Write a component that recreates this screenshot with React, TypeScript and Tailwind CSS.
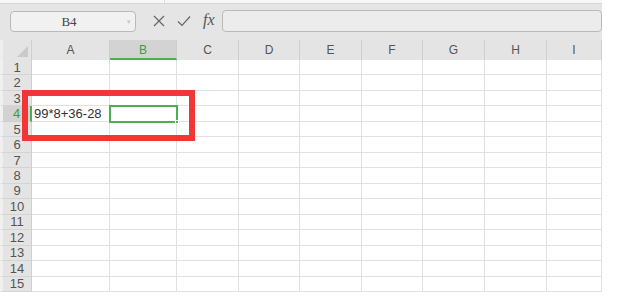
import React from "react";

const cols = ["A", "B", "C", "D", "E", "F", "G", "H", "I"];
const widths = [78, 67, 62, 61, 62, 61, 62, 62, 55];
const rows = Array.from({ length: 15 }, (_, i) => i + 1);

export default function App() {
  return (
    <div
      className="relative w-[620px] h-[307px] bg-white overflow-hidden leading-none"
      style={{ fontFamily: '"Liberation Sans", Arial, sans-serif' }}
    >
      <div className="w-[602px] flex flex-col">
        {/* top strip */}
        <div className="h-[4px] bg-[#f7f7f7] border-b border-[#d6d6d6] flex">
          <div className="w-[165px] border-r border-[#dcdcdc]" />
        </div>
        {/* formula bar */}
        <div className="h-[36px] bg-[#e5e5e5] flex items-center pb-[2px]">
          <div className="ml-[10px] w-[126px] h-[21px] rounded-[4px] border border-[#b9b9b9] bg-[#f1f1f1] flex items-center relative">
            <span
              className="flex-1 text-center text-[13px] text-[#444] pr-[8px]"
              style={{ fontFamily: '"Liberation Serif", serif' }}
            >
              B4
            </span>
            <span className="absolute right-[4px] top-[6px] text-[7px] text-[#c8c8c8]">▾</span>
          </div>
          <div className="ml-[17px] flex items-center gap-[12px] text-[#555]">
            <svg width="12" height="12" viewBox="0 0 12 12">
              <path d="M1 1 L11 11 M11 1 L1 11" stroke="#666" strokeWidth="1.2" fill="none" />
            </svg>
            <svg width="14" height="12" viewBox="0 0 14 12">
              <path d="M1 6.5 L5 10.5 L13 1.5" stroke="#666" strokeWidth="1.2" fill="none" />
            </svg>
            <span
              className="italic text-[16px] text-[#555] -mt-[2px]"
              style={{ fontFamily: '"Liberation Serif", serif' }}
            >
              fx
            </span>
          </div>
          <div className="ml-[7px] flex-1 h-[22px] rounded-[4px] border border-[#b9b9b9] bg-[#ececec]" />
        </div>
        {/* column header */}
        <div className="h-[20px] flex bg-[#e4e4e4]">
          <div className="w-[32px] relative border-l-[3px] border-[#eeeeee] border-r border-r-[#cfcfcf]">
            <svg className="absolute right-[3px] bottom-[3px]" width="11" height="11" viewBox="0 0 11 11">
              <path d="M11 0 L11 11 L0 11 Z" fill="#c9c9c9" />
            </svg>
          </div>
          {cols.map((c, i) => (
            <div
              key={c}
              style={{ width: widths[i] }}
              className={
                c === "B"
                  ? "flex items-center justify-center text-[12px] bg-[#d3d3d3] text-[#3f9b3f] border-b-2 border-[#4caf50] border-r border-r-[#cfcfcf] pt-[2px]"
                  : "flex items-center justify-center text-[12px] text-[#555] border-r border-[#cfcfcf]"
              }
            >
              {c}
            </div>
          ))}
        </div>
        {/* rows */}
        <div className="h-[232px] grid grid-rows-[repeat(15,minmax(0,1fr))]">
          {rows.map((r) => (
            <div key={r} className="flex min-h-0 overflow-hidden">
              <div
                className={
                  r === 4
                    ? "w-[32px] border-l-[3px] border-[#f0f0f0] bg-[#d2d2d2] border-b border-b-[#cfcfcf] border-r-2 border-r-[#4caf50] flex items-center justify-center text-[13px] text-[#3f9b3f]"
                    : "w-[32px] border-l-[3px] border-[#f0f0f0] bg-[#e4e4e4] border-b border-b-[#d4d4d4] border-r border-r-[#cfcfcf] flex items-center justify-center text-[13px] text-[#555]"
                }
              >
                {r}
              </div>
              {cols.map((c, i) => (
                <div
                  key={c}
                  style={{ width: widths[i] }}
                  className="border-r border-b border-[#e1e1e1] flex items-center text-[13px] text-[#333] whitespace-nowrap"
                >
                  {r === 4 && c === "A" ? <span className="pl-[2px]">99*8+36-28</span> : null}
                </div>
              ))}
            </div>
          ))}
        </div>
      </div>
      {/* selection B4 */}
      <div className="absolute left-[109px] top-[105px] w-[69px] h-[18px] border-2 border-[#4caf50]">
        <div className="absolute -right-[3px] -bottom-[3px] w-[4px] h-[4px] bg-[#4caf50] border border-white" />
      </div>
      {/* red annotation box */}
      <div className="absolute left-[22px] top-[90px] w-[173px] h-[51px] border-[6px] border-[#f23636]" />
    </div>
  );
}
